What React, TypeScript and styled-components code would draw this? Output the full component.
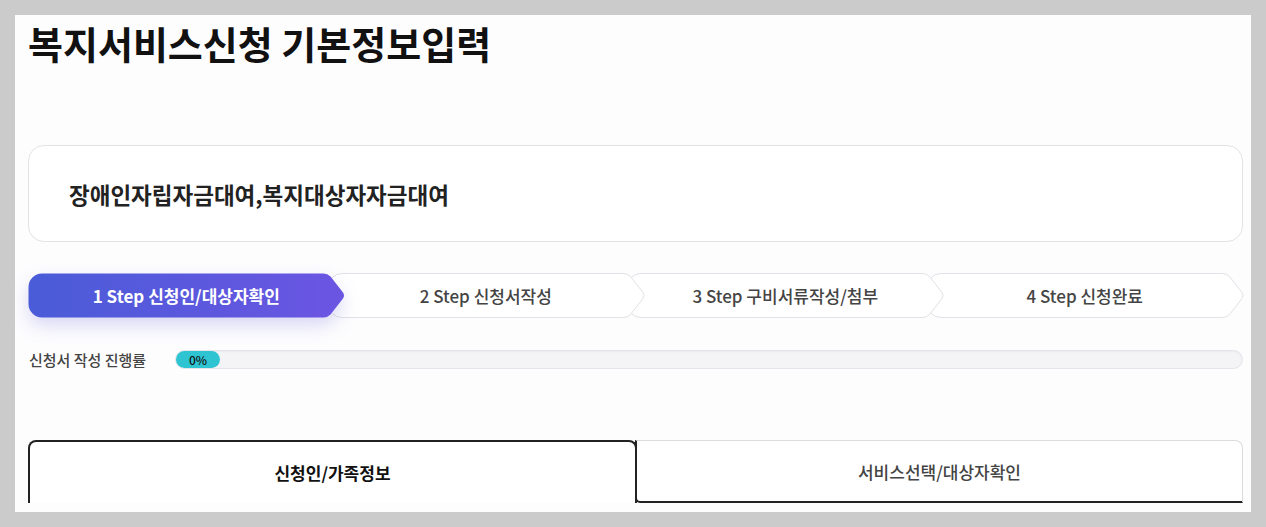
import styled, { createGlobalStyle } from 'styled-components'

const GlobalStyle = createGlobalStyle`
   html, body {
      margin: 0;
      padding: 0;
      background: #cbcbcb;
      font-family: "Noto Sans CJK KR", "Noto Sans", sans-serif;
   }
   * {
      box-sizing: border-box;
   }
`

const Page = styled.div`
   padding: 15px;
   height: 527px;
`

const Panel = styled.div`
   background: #fdfdfe;
   height: 497px;
   overflow: hidden;
   padding: 0 8px 0 13px;
   display: flex;
   flex-direction: column;
`

const Title = styled.h1`
   margin: 0;
   font-size: 38px;
   line-height: 56px;
   font-weight: 700;
   letter-spacing: 0;
   color: #111;
`

const ServiceCard = styled.div`
   margin-top: 74px;
   height: 97px;
   border: 1px solid #e3e3e6;
   border-radius: 16px;
   background: #fff;
   display: flex;
   align-items: center;
   padding: 0 40px;
   font-size: 22.5px;
   font-weight: 700;
   letter-spacing: 0;
   color: #222;
`

const Steps = styled.div`
   margin-top: 31px;
   display: flex;
   height: 45px;
`

const StepItem = styled.div<{ $order: number }>`
   position: relative;
   flex: 0 0 316.5px;
   height: 45px;
   margin-left: ${(p) => (p.$order === 0 ? 0 : -17)}px;
   z-index: ${(p) => 10 - p.$order};
   display: flex;
   align-items: center;
   justify-content: center;
`

const StepShape = styled.svg<{ $active: boolean }>`
   position: absolute;
   left: 0;
   top: 0;
   overflow: visible;
   filter: ${(p) =>
      p.$active ? 'drop-shadow(0 8px 9px rgba(90, 80, 210, 0.22))' : 'none'};
`

const StepLabel = styled.span<{ $active: boolean }>`
   position: relative;
   font-size: 17px;
   font-weight: ${(p) => (p.$active ? 700 : 500)};
   color: ${(p) => (p.$active ? '#fff' : '#444')};
`

const ProgressRow = styled.div`
   margin-top: 31px;
   display: flex;
   align-items: center;
   height: 20px;
`

const ProgressLabel = styled.span`
   width: 147px;
   padding-left: 1px;
   font-size: 15px;
   font-weight: 500;
   color: #444;
`

const ProgressTrack = styled.div`
   flex: 1;
   height: 19px;
   border: 1px solid #e4e4ea;
   border-radius: 10px;
   background: #f4f4f7;
   box-shadow: inset 0 1px 2px rgba(0, 0, 0, 0.04);
   display: flex;
`

const ProgressFill = styled.div`
   height: 17px;
   border-radius: 9px;
   background: #2ec4d2;
   display: flex;
   align-items: center;
   justify-content: center;
   font-size: 12px;
   font-weight: 500;
   color: #111;
`

const Tabs = styled.div`
   margin-top: 71px;
   display: flex;
   height: 63px;
`

const Tab = styled.div<{ $active: boolean }>`
   flex: 1;
   display: flex;
   align-items: center;
   justify-content: center;
   font-size: 17px;
   background: #fff;
   ${(p) =>
      p.$active
         ? `
      border: 2px solid #222;
      border-bottom: none;
      border-radius: 8px 8px 0 0;
      font-weight: 700;
      color: #111;
      position: relative;
      z-index: 1;
   `
         : `
      margin-left: -2px;
      border-top: 1px solid #dcdce0;
      border-right: 1px solid #dcdce0;
      border-left: 2px solid #222;
      border-bottom: 2px solid #222;
      border-radius: 0 8px 0 5px;
      font-weight: 500;
      color: #444;
   `}
`

const W = 316.5
const stepPath = (w: number) =>
   `M14 0.5 H${w - 21} Q${w - 17} 0.5 ${w - 14} 3.5 L${w - 1.5} 19.5 Q${w + 0.5} 22.5 ${w - 1.5} 25.5 L${w - 14} 41.5 Q${w - 17} 44.5 ${w - 21} 44.5 H14 A13.5 13.5 0 0 1 0.5 31 V14 A13.5 13.5 0 0 1 14 0.5 Z`

const steps = ['1 Step 신청인/대상자확인', '2 Step 신청서작성', '3 Step 구비서류작성/첨부', '4 Step 신청완료']

const App = () => {
   const progress = 0

   return (
      <Page>
         <GlobalStyle />
         <Panel>
            <Title>복지서비스신청 기본정보입력</Title>

            <ServiceCard>장애인자립자금대여,복지대상자자금대여</ServiceCard>

            <Steps>
               {steps.map((label, i) => (
                  <StepItem key={label} $order={i}>
                     <StepShape $active={i === 0} width={W} height={45} viewBox={`0 0 ${W} 45`}>
                        <defs>
                           <linearGradient id="stepGrad" x1="0" y1="0" x2="1" y2="0">
                              <stop offset="0" stopColor="#4a5cd8" />
                              <stop offset="1" stopColor="#6b55e2" />
                           </linearGradient>
                        </defs>
                        <path
                           d={stepPath(W)}
                           fill={i === 0 ? 'url(#stepGrad)' : '#fff'}
                           stroke={i === 0 ? 'none' : '#e1e1e7'}
                           strokeWidth={1}
                        />
                     </StepShape>
                     <StepLabel $active={i === 0}>{label}</StepLabel>
                  </StepItem>
               ))}
            </Steps>

            <ProgressRow>
               <ProgressLabel>신청서 작성 진행률</ProgressLabel>
               <ProgressTrack>
                  <ProgressFill style={{ width: Math.max(44, progress * 10.67) }}>
                     {progress}%
                  </ProgressFill>
               </ProgressTrack>
            </ProgressRow>

            <Tabs>
               <Tab $active>신청인/가족정보</Tab>
               <Tab $active={false}>서비스선택/대상자확인</Tab>
            </Tabs>
         </Panel>
      </Page>
   )
}

export default App
